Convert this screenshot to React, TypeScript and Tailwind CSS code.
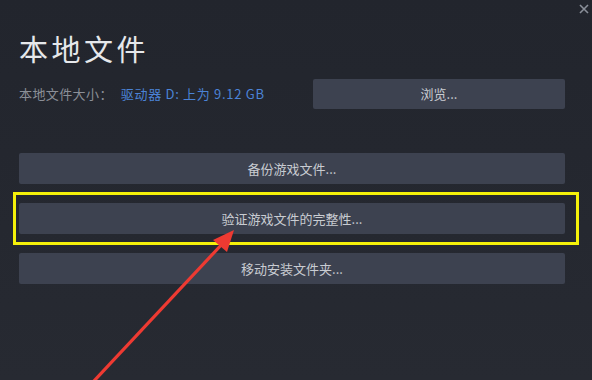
import React from "react";

const cjk = { fontFamily: '"Noto Sans CJK SC", "Noto Sans", sans-serif' };

function ActionButton({ label }: { label: string }) {
  return (
    <button className="flex h-[31px] w-full items-center justify-center rounded-[2px] bg-[#3d4250] text-[13px] text-[#c9ccd2]">
      {label}
    </button>
  );
}

export default function App() {
  return (
    <div
      className="relative h-[380px] w-[592px] overflow-hidden bg-gradient-to-b from-[#22252d] to-[#272a32]"
      style={cjk}
    >
      {/* close */}
      <button className="absolute right-[3px] top-[4px] text-[#8a8f99]">
        <svg width="10" height="10" viewBox="0 0 10 10">
          <path d="M1 1L9 9M9 1L1 9" stroke="currentColor" strokeWidth="1.6" />
        </svg>
      </button>

      <div className="flex flex-col pl-[19px] pr-[27px] pt-[30px]">
        <h1 className="text-[29px] leading-[36px] tracking-[3.5px] text-[#e6e8eb]">本地文件</h1>

        <div className="mt-[13px] flex h-[30px] items-center">
          <div className="flex-1 text-[13px] tracking-[0.4px] text-[#8b8f97]">
            本地文件大小：<span className="ml-[8px] tracking-[0.7px] text-[#4b83d6]">驱动器 D: 上为 9.12 GB</span>
          </div>
          <button className="flex h-[30px] w-[252px] items-center justify-center rounded-[2px] bg-[#3d4250] text-[13px] text-[#c9ccd2]">
            浏览...
          </button>
        </div>

        <div className="mt-[44px] flex flex-col gap-[19px]">
          <ActionButton label="备份游戏文件..." />
          <ActionButton label="验证游戏文件的完整性..." />
          <ActionButton label="移动安装文件夹..." />
        </div>
      </div>

      {/* annotation highlight */}
      <div className="pointer-events-none absolute left-[13px] top-[192px] h-[53px] w-[566px] border-[3px] border-[#f5f10a]" />

      {/* annotation arrow */}
      <svg className="pointer-events-none absolute left-0 top-0" width="592" height="380" viewBox="0 0 592 380">
        <line x1="93" y1="382" x2="224" y2="242" stroke="#ee3a32" strokeWidth="3.2" />
        <polygon points="234,230 213,240 227,252" fill="#ee3a32" />
      </svg>
    </div>
  );
}
